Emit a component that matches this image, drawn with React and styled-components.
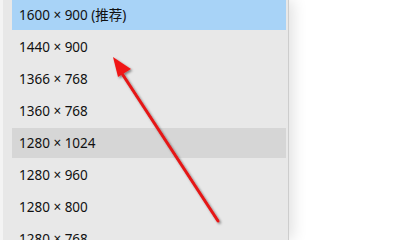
import styled, {createGlobalStyle} from 'styled-components'

const resolutions = [
  {label: '1600 × 900 (推荐)', state: 'selected'},
  {label: '1440 × 900'},
  {label: '1366 × 768'},
  {label: '1360 × 768'},
  {label: '1280 × 1024', state: 'hover'},
  {label: '1280 × 960'},
  {label: '1280 × 800'},
  {label: '1280 × 768'},
]

const rowColors = {
  selected: '#a8d3f7',
  hover: '#d6d6d6',
}

export default function App() {
  return (
    <>
      <GlobalStyle />
      <Screen>
        <Menu>
          {resolutions.map(item => (
            <Row key={item.label} $state={item.state}>
              {item.label}
            </Row>
          ))}
        </Menu>
        <Arrow width="400" height="240" viewBox="0 0 400 240">
          <defs>
            <filter id="shadow" x="-20%" y="-20%" width="140%" height="140%">
              <feDropShadow dx="1.5" dy="1.5" stdDeviation="1.2" floodColor="#000" floodOpacity="0.45" />
            </filter>
          </defs>
          <g filter="url(#shadow)">
            <line x1="218" y1="221" x2="121" y2="72" stroke="#e51515" strokeWidth="3" strokeLinecap="round" />
            <polygon points="113,57 131,69 118,77" fill="#f01818" />
          </g>
        </Arrow>
      </Screen>
    </>
  )
}

const GlobalStyle = createGlobalStyle`
  html, body {
    margin: 0;
    padding: 0;
    background: #ffffff;
  }
`

const Screen = styled.div`
  position: relative;
  width: 400px;
  height: 240px;
  overflow: hidden;
  background: #ffffff;
`

const Menu = styled.div`
  width: 274px;
  height: 240px;
  padding: 0 2px 0 9px;
  background: #e8e8e8;
  border-left: 3px solid #f4f4f4;
  border-right: 1px solid #cdcdcd;
  box-shadow: 4px 0 14px rgba(0, 0, 0, 0.12);
  display: flex;
  flex-direction: column;
  gap: 2px;
  box-sizing: content-box;
`

const Row = styled.div`
  flex: none;
  height: 30px;
  line-height: 30px;
  padding-left: 7px;
  font-family: 'Noto Sans', 'Noto Sans CJK SC', sans-serif;
  font-size: 13.5px;
  color: #111;
  background: ${p => rowColors[p.$state] || 'transparent'};
`

const Arrow = styled.svg`
  position: absolute;
  left: 0;
  top: 0;
  pointer-events: none;
`
